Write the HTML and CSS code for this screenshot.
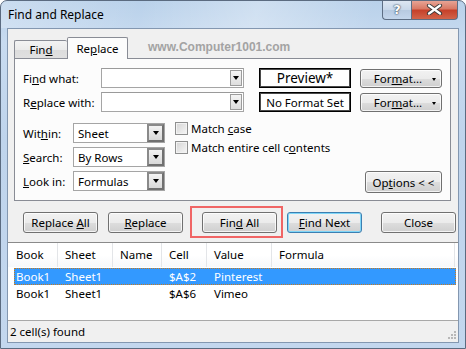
FILE: index.html
```html
<!DOCTYPE html>
<html>
<head>
<meta charset="utf-8">
<link rel="stylesheet" href="styles.css">
</head>
<body>
<div class="window">
  <div class="titlebar">
    <span class="title">Find and Replace</span>
    <div class="caption">
      <div class="cbtn help">?</div>
      <div class="cbtn close"><svg width="17" height="11" viewBox="0 0 17 11"><path d="M3 1.5 L14 9.5 M14 1.5 L3 9.5" stroke="#3b3b3b" stroke-width="4.2" stroke-linecap="round"/><path d="M3 1.5 L14 9.5 M14 1.5 L3 9.5" stroke="#ffffff" stroke-width="2.2" stroke-linecap="round"/></svg></div>
    </div>
  </div>
  <div class="client">
    <div class="tabs">
      <div class="tab"><span>Fin<u>d</u></span></div>
      <div class="tab active"><span>Re<u>p</u>lace</span></div>
      <div class="watermark">www.Computer1001.com</div>
    </div>
    <div class="panel">
      <div class="row">
        <label class="lbl">Fi<u>n</u>d what:</label>
        <div class="combo"><div class="combo-text"></div><div class="cdrop"><i class="arrow"></i></div></div>
        <div class="preview big">Preview*</div>
        <div class="btn fmt"><span>For<u>m</u>at...</span><i class="arrow small"></i></div>
      </div>
      <div class="row r2">
        <label class="lbl">R<u>e</u>place with:</label>
        <div class="combo"><div class="combo-text"></div><div class="cdrop"><i class="arrow"></i></div></div>
        <div class="preview">No Format Set</div>
        <div class="btn fmt"><span>For<u>m</u>at...</span><i class="arrow small"></i></div>
      </div>
      <div class="lower">
        <div class="selects">
          <div class="srow"><label class="slbl">Wit<u>h</u>in:</label><div class="select"><span>Sheet</span><div class="sdrop"><i class="arrow"></i></div></div></div>
          <div class="srow"><label class="slbl"><u>S</u>earch:</label><div class="select"><span>By Rows</span><div class="sdrop"><i class="arrow"></i></div></div></div>
          <div class="srow s3"><label class="slbl"><u>L</u>ook in:</label><div class="select"><span>Formulas</span><div class="sdrop"><i class="arrow"></i></div></div></div>
        </div>
        <div class="checks">
          <div class="chk"><span class="box"></span><span>Match <u>c</u>ase</span></div>
          <div class="chk"><span class="box"></span><span>Match entire cell c<u>o</u>ntents</span></div>
        </div>
        <div class="btn opts"><span>Op<u>t</u>ions &lt; &lt;</span></div>
      </div>
    </div>
    <div class="actions">
      <div class="btn act"><span>Replace <u>A</u>ll</span></div>
      <div class="btn act"><span><u>R</u>eplace</span></div>
      <div class="btn act findall"><span>Fin<u>d</u> All</span></div>
      <div class="btn act default"><span><u>F</u>ind Next</span></div>
      <div class="btn act close2"><span>Close</span></div>
      <div class="highlight"></div>
    </div>
    <div class="list">
      <div class="lhead">
        <div class="hc">Book</div>
        <div class="hc">Sheet</div>
        <div class="hc">Name</div>
        <div class="hc">Cell</div>
        <div class="hc">Value</div>
        <div class="hc last">Formula</div>
      </div>
      <div class="lrow sel">
        <div class="c first">Book1</div><div class="c">Sheet1</div><div class="c"></div><div class="c">$A$2</div><div class="c">Pinterest</div><div class="c"></div>
      </div>
      <div class="lrow">
        <div class="c first">Book1</div><div class="c">Sheet1</div><div class="c"></div><div class="c">$A$6</div><div class="c">Vimeo</div><div class="c"></div>
      </div>
    </div>
    <div class="status">
      <span>2 cell(s) found</span>
      <svg class="grip" width="8" height="8" viewBox="0 0 8 8"><g fill="#b8b8b8"><rect x="6" y="0" width="2" height="2"/><rect x="3" y="3" width="2" height="2"/><rect x="6" y="3" width="2" height="2"/><rect x="0" y="6" width="2" height="2"/><rect x="3" y="6" width="2" height="2"/><rect x="6" y="6" width="2" height="2"/></g></svg>
    </div>
  </div>
</div>
</body>
</html>
```
FILE: styles.css
```css
* { box-sizing: border-box; }
html, body { margin: 0; padding: 0; background: #ffffff; }
body { font-family: "Noto Sans", "DejaVu Sans", sans-serif; font-size: 11.5px; color: #000; }
u { text-decoration: underline; text-underline-offset: 1px; }

.window {
  width: 466px; height: 349px;
  border: 1px solid #5b6b80;
  border-radius: 7px 7px 0 0;
  background: linear-gradient(180deg, #b9d1ea 0%, #c8dbf0 12%, #bfd4ec 40%, #c3d7ee 100%);
  display: flex; flex-direction: column;
  overflow: hidden;
}
.titlebar {
  height: 27px; flex: none;
  display: flex; align-items: flex-start;
  padding-left: 7px;
  background: linear-gradient(100deg, rgba(255,255,255,0.25) 0%, rgba(255,255,255,0) 30%, rgba(255,255,255,0.3) 55%, rgba(255,255,255,0) 80%);
}
.title { margin-top: 6px; font-size: 12px; line-height: 16px; color: #000; }
.caption { margin-left: auto; margin-right: 7px; display: flex; margin-top: -1px; }
.cbtn {
  height: 20px; border: 1px solid #5e6e84; border-top: none;
  display: flex; align-items: center; justify-content: center;
}
.help {
  width: 29px; border-radius: 0 0 0 4px; border-right: none;
  background: linear-gradient(180deg, #dfe8f3 0%, #c9d8ea 50%, #b6c9e0 51%, #c4d6ec 100%);
  color: #fff; font-weight: bold; font-size: 13px; font-family: "DejaVu Sans", sans-serif;
  text-shadow: 0 0 2px #2a3a50, 0 0 1px #2a3a50;
}
.close {
  width: 47px; border-radius: 0 0 4px 0;
  background: linear-gradient(180deg, #e9a99b 0%, #d97a66 45%, #c6412a 55%, #d2644a 100%);
}

.client {
  margin: 0 6px 0 6px; height: 315px;
  border: 1px solid #8397b0;
  background: #f0f0f0;
  display: flex; flex-direction: column;
}
.tabs { height: 29px; display: flex; align-items: flex-end; padding-left: 6px; margin-top: 0; position: relative; z-index: 1; }
.tab {
  height: 18px; width: 53px;
  border: 1px solid #898c95; border-bottom: none; border-right: none;
  border-radius: 2px 2px 0 0;
  background: linear-gradient(180deg, #f3f3f3 0%, #ebebeb 50%, #dcdcdc 51%, #e0e0e0 100%);
  text-align: center; line-height: 17px; margin-bottom: 0;
}
.tab.active {
  height: 22px; width: 61px; margin-bottom: -1px;
  border-right: 1px solid #898c95;
  background: #fcfcfc; line-height: 21px; padding-bottom: 1px;
}
.watermark {
  font-family: "Liberation Sans", Arial, sans-serif; font-weight: bold; font-size: 12px;
  color: #a3a3a3; margin-left: 20px; align-self: flex-start; margin-top: 11px;
}

.panel {
  margin: 0 7px 0 6px; height: 143px;
  border: 1px solid #898c95;
  background: #fcfcfc;
  padding: 9px 8px 0 8px;
}
.row { display: flex; align-items: center; height: 20px; }
.row.r2 { margin-top: 4px; }
.lbl { width: 78px; flex: none; }
.combo {
  width: 143px; height: 20px; flex: none;
  border: 1px solid #a5a5a5; border-top-color: #9a9a9a;
  background: #fff; display: flex; justify-content: flex-end; padding: 1px;
}
.cdrop {
  width: 12px; height: 16px;
  border: 1px solid #9c9c9c;
  background: linear-gradient(180deg, #f4f4f4, #dedede);
  display: flex; align-items: center; justify-content: center;
}
.arrow {
  display: block; width: 0; height: 0;
  border-left: 3.5px solid transparent; border-right: 3.5px solid transparent;
  border-top: 4px solid #000;
}
.arrow.small { border-left-width: 2.5px; border-right-width: 2.5px; border-top-width: 3px; }
.preview {
  width: 92px; height: 20px; margin-left: 15px; flex: none;
  border: 1px solid #000; box-shadow: inset 0 0 0 1px #4a4a4a;
  background: #fff; display: flex; align-items: center; justify-content: center;
}
.preview.big { font-size: 13.5px; }

.btn {
  border: 1px solid #707070; border-radius: 3px;
  background: linear-gradient(180deg, #f2f2f2 0%, #ebebeb 50%, #dddddd 51%, #cfcfcf 100%);
  box-shadow: inset 0 0 0 1px rgba(255,255,255,0.75);
  display: flex; align-items: center; justify-content: center;
  flex: none; white-space: nowrap;
}
.fmt { width: 82px; height: 19px; margin-left: 9px; position: relative; padding-right: 6px; }
.fmt .arrow { position: absolute; right: 5px; top: 8px; }

.lower { display: flex; margin-top: 11px; height: 70px; }
.selects { display: flex; flex-direction: column; }
.srow { display: flex; align-items: center; height: 20px; margin-bottom: 4px; }
.srow.s3 { margin-top: 0; margin-bottom: 0; }
.slbl { width: 50px; flex: none; }
.select {
  width: 92px; height: 20px; flex: none;
  border: 1px solid #a5a5a5; background: #fff;
  display: flex; align-items: center; padding: 1px 1px 1px 4px;
}
.select span { flex: 1; }
.sdrop {
  width: 17px; height: 18px; margin-top: -1px; margin-bottom: -1px; margin-right: -1px;
  border: 2px solid #707070; border-top-color: #8a8a8a; border-left-color: #8a8a8a;
  background: linear-gradient(180deg, #f3f3f3, #d8d8d8);
  display: flex; align-items: center; justify-content: center;
}
.checks { margin-left: 10px; display: flex; flex-direction: column; margin-top: -1px; }
.chk { display: flex; align-items: center; height: 13px; margin-bottom: 6px; white-space: nowrap; }
.chk .box {
  width: 13px; height: 13px; margin-right: 3px; flex: none;
  border: 1px solid #8e8f8f;
  background: linear-gradient(135deg, #d4d4d4, #f6f6f6);
  box-shadow: inset 0 0 0 1px #f2f2f2;
}
.opts { width: 77px; height: 22px; margin-left: auto; align-self: flex-end; margin-bottom: 0px; }

.actions {
  display: flex; height: 21px; margin-top: 11px; padding-left: 15px; position: relative;
}
.act { width: 75px; height: 21px; }
.act + .act { margin-left: 10px; }
.act.findall, .act.close2 { margin-left: 19px; }
.act.default {
  border-color: #3c7fb1;
  box-shadow: inset 0 0 0 1px #7fd6f8;
}
.highlight {
  position: absolute; left: 182px; top: -6px; width: 93px; height: 32px;
  border: 2px solid #f06565;
}

.list {
  margin-top: 9px; height: 79px;
  border-top: 1px solid #8a8a8a; border-bottom: 1px solid #a8a8a8;
  background: #fff;
}
.lhead {
  display: grid; grid-template-columns: 50px 55px 49px 45px 65px 183px;
  height: 24px;
  background: linear-gradient(180deg, #ffffff 0%, #ffffff 50%, #f7f8fa 100%);
}
.hc { border-right: 1px solid #e3e5e8; padding-left: 7px; line-height: 24px; }
.hc:first-child { padding-left: 8px; }
.lrow {
  display: grid; grid-template-columns: 44px 55px 49px 45px 65px 1fr;
  height: 17px; margin: 0 2px 0 6px; line-height: 15px;
  border: 1px solid transparent;
}
.lhead + .lrow { margin-top: 1px; }
.lrow.sel { background: #3399ff; color: #fff; border: 1px dotted #c77a1e; }
.lrow .c { padding-left: 6px; white-space: nowrap; }
.lrow .c.first { padding-left: 1px; }

.status {
  flex: 1; display: flex; align-items: center; padding-left: 2px; position: relative;
}
.grip { position: absolute; right: 2px; bottom: 3px; }
```
